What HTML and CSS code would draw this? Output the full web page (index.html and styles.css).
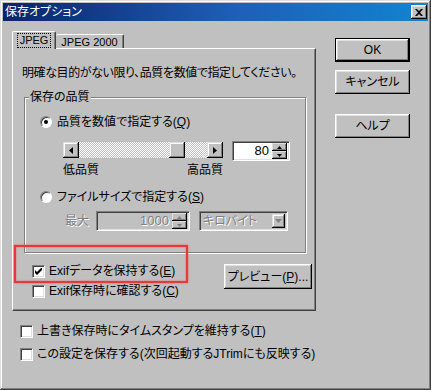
FILE: index.html
```html
<!DOCTYPE html>
<html lang="ja">
<head>
    <meta charset="UTF-8">
    <title>保存オプション</title>
    <link rel="stylesheet" href="styles.css">
</head>
<body>
    <div class="window">
        <!-- Title bar -->
        <div class="titlebar">
            <span class="title">保存オプション</span>
            <span class="close">
                <svg width="8" height="7" viewBox="0 0 8 7"><path d="M0 0h2l2 2 2-2h2L5 3.5 8 7H6L4 5 2 7H0l3-3.5z" fill="#000"/></svg>
            </span>
        </div>

        <div class="content">
            <div class="main">
                <!-- Tabs -->
                <div class="tabs">
                    <div class="tab active"><span class="focus">JPEG</span></div>
                    <div class="tab">JPEG 2000</div>
                </div>

                <div class="panel">
                    <p class="hint">明確な目的がない限り、品質を数値で指定してください。</p>

                    <fieldset class="group">
                        <legend>保存の品質</legend>

                        <div class="row">
                            <span class="radio checked"></span>
                            <span>品質を数値で指定する(<u>Q</u>)</span>
                        </div>

                        <div class="slider-row">
                            <div class="slider-col">
                                <div class="scrollbar">
                                    <span class="sb-btn">
                                        <svg width="4" height="7" viewBox="0 0 4 7"><path d="M4 0v7L0 3.5z" fill="#000"/></svg>
                                    </span>
                                    <div class="track"><span class="thumb"></span></div>
                                    <span class="sb-btn">
                                        <svg width="4" height="7" viewBox="0 0 4 7"><path d="M0 0v7l4-3.5z" fill="#000"/></svg>
                                    </span>
                                </div>
                                <div class="scale">
                                    <span>低品質</span>
                                    <span>高品質</span>
                                </div>
                            </div>
                            <div class="field spin">
                                <span class="value">80</span>
                                <div class="spin-btns">
                                    <span class="spin-btn"><svg width="5" height="3" viewBox="0 0 5 3"><path d="M0 3h5L2.5 0z" fill="#000"/></svg></span>
                                    <span class="spin-btn"><svg width="5" height="3" viewBox="0 0 5 3"><path d="M0 0h5L2.5 3z" fill="#000"/></svg></span>
                                </div>
                            </div>
                        </div>

                        <div class="row row-size">
                            <span class="radio"></span>
                            <span>ファイルサイズで指定する(<u>S</u>)</span>
                        </div>

                        <div class="size-row">
                            <span class="disabled">最大</span>
                            <div class="field field-off size-input">
                                <span class="value disabled">1000</span>
                                <div class="spin-btns">
                                    <span class="spin-btn"><svg width="5" height="3" viewBox="0 0 5 3"><path d="M0 3h5L2.5 0z" fill="#808080"/></svg></span>
                                    <span class="spin-btn"><svg width="5" height="3" viewBox="0 0 5 3"><path d="M0 0h5L2.5 3z" fill="#808080"/></svg></span>
                                </div>
                            </div>
                            <div class="field field-off combo">
                                <span class="combo-text disabled">キロバイト</span>
                                <span class="combo-btn"><svg width="7" height="4" viewBox="0 0 7 4"><path d="M0 0h7L3.5 4z" fill="#808080"/></svg></span>
                            </div>
                        </div>
                    </fieldset>

                    <div class="exif-row">
                        <div class="exif-checks">
                            <div class="row">
                                <span class="check">
                                    <svg width="7" height="7" viewBox="0 0 7 7"><path d="M0 2l2 2 5-5v3L2 7 0 5z" fill="#000"/></svg>
                                </span>
                                <span>Exifデータを保持する(<u>E</u>)</span>
                            </div>
                            <div class="row">
                                <span class="check"></span>
                                <span>Exif保存時に確認する(<u>C</u>)</span>
                            </div>
                        </div>
                        <button class="btn btn-preview">プレビュー(<u>P</u>)...</button>
                    </div>

                    <!-- annotation -->
                    <div class="highlight"></div>
                </div>

                <div class="options">
                    <div class="row">
                        <span class="check"></span>
                        <span>上書き保存時にタイムスタンプを維持する(<u>T</u>)</span>
                    </div>
                    <div class="row">
                        <span class="check"></span>
                        <span>この設定を保存する(次回起動するJTrimにも反映する)</span>
                    </div>
                </div>
            </div>

            <div class="side">
                <button class="btn btn-default">OK</button>
                <button class="btn">キャンセル</button>
                <button class="btn btn-help">ヘルプ</button>
            </div>
        </div>
    </div>
</body>
</html>
```

FILE: styles.css
```css
* {
    margin: 0;
    padding: 0;
    box-sizing: border-box;
}

body {
    width: 431px;
    height: 390px;
    overflow: hidden;
    background: #c0c0c0;
    font-family: "Liberation Sans", "Noto Sans CJK JP", sans-serif;
    font-size: 12px;
    line-height: 14px;
    font-feature-settings: "palt";
    color: #000;
}

u {
    text-decoration: underline;
    text-underline-offset: 1px;
}

.window {
    width: 431px;
    height: 390px;
    padding: 3px;
    background: #c0c0c0;
    box-shadow: inset -1px -1px #404040, inset 1px 1px #dfdfdf, inset -2px -2px #808080, inset 2px 2px #fff;
}

/* Title bar */
.titlebar {
    height: 18px;
    display: flex;
    align-items: center;
    justify-content: space-between;
    padding: 0 1px 0 2px;
    background: linear-gradient(90deg, #0a246a 0%, #1f5fb8 55%, #1084d0 100%);
    color: #fff;
}

.title {
    font-size: 12px;
}

.close {
    width: 16px;
    height: 14px;
    display: flex;
    align-items: center;
    justify-content: center;
    background: #c0c0c0;
    box-shadow: inset -1px -1px #000, inset 1px 1px #fff, inset -2px -2px #808080, inset 2px 2px #dfdfdf;
}

.content {
    display: flex;
    padding: 11px 0 0 9px;
}

.main {
    width: 304px;
}

/* Tabs */
.tabs {
    height: 16px;
    display: flex;
    align-items: flex-end;
    position: relative;
    z-index: 1;
    font-size: 11px;
}

.tab {
    height: 14px;
    display: flex;
    align-items: center;
    justify-content: center;
    white-space: nowrap;
    border-left: 1px solid #fff;
    border-top: 1px solid #fff;
    border-right: 1px solid #404040;
    border-radius: 2px 2px 0 0;
    box-shadow: inset -1px 0 #808080;
    line-height: 12px;
}

.tab.active {
    width: 44px;
    height: 18px;
    margin-bottom: -1px;
    padding-bottom: 1px;
    background: #c0c0c0;
}

.tab:nth-child(2) {
    width: 68px;
    border-left: none;
    padding-top: 1px;
}

.focus {
    outline: 1px dotted #000;
    padding: 0 2px;
    line-height: 13px;
}

/* Panel */
.panel {
    position: relative;
    height: 263px;
    border: 1px solid;
    border-color: #fff #404040 #404040 #fff;
    box-shadow: inset -1px -1px #808080;
    padding: 17px 0 0 9px;
}

.hint {
    height: 14px;
    letter-spacing: -0.4px;
}

.group {
    width: 282px;
    height: 163px;
    margin: 10px 0 0 2px;
    padding: 11px 0 0 15px;
    border: 1px solid #808080;
    box-shadow: inset 1px 1px #fff, 1px 1px #fff;
}

.group legend {
    margin-left: -11px;
    padding: 0 1px;
    background: #c0c0c0;
    line-height: 14px;
}

.row {
    height: 14px;
    display: flex;
    align-items: center;
    white-space: nowrap;
}

.radio {
    width: 12px;
    height: 12px;
    margin-right: 5px;
    border-radius: 50%;
    background: #fff;
    border: 1px solid;
    border-color: #808080 #fff #fff #808080;
    box-shadow: inset 1px 1px #404040;
    display: flex;
    align-items: center;
    justify-content: center;
}

.radio.checked::after {
    content: "";
    width: 4px;
    height: 4px;
    border-radius: 50%;
    background: #000;
}

/* Slider */
.slider-row {
    display: flex;
    align-items: flex-start;
    margin: 13px 0 0 23px;
}

.slider-col {
    width: 160px;
}

.scrollbar {
    height: 16px;
    display: flex;
}

.sb-btn {
    width: 16px;
    height: 16px;
    display: flex;
    align-items: center;
    justify-content: center;
    background: #c0c0c0;
    box-shadow: inset -1px -1px #000, inset 1px 1px #dfdfdf, inset -2px -2px #808080, inset 2px 2px #fff;
}

.track {
    flex: 1;
    display: flex;
    justify-content: flex-end;
    padding-right: 22px;
    background: repeating-conic-gradient(#fff 0 25%, #c0c0c0 0 50%) 0 0 / 2px 2px;
}

.thumb {
    width: 16px;
    height: 16px;
    background: #c0c0c0;
    box-shadow: inset -1px -1px #000, inset 1px 1px #dfdfdf, inset -2px -2px #808080, inset 2px 2px #fff;
}

.scale {
    display: flex;
    justify-content: space-between;
    margin-top: 5px;
}

/* Fields */
.field {
    height: 20px;
    display: flex;
    align-items: center;
    background: #fff;
    border: 1px solid;
    border-color: #808080 #fff #fff #808080;
    box-shadow: inset 1px 1px #404040, inset -1px -1px #dfdfdf;
    padding: 2px;
}

.field-off {
    background: #c0c0c0;
}

.spin {
    width: 58px;
    margin: -1px 0 0 9px;
}

.value {
    flex: 1;
    text-align: right;
    padding-right: 3px;
    font-size: 13px;
}

.spin-btns {
    width: 15px;
    height: 16px;
    display: flex;
    flex-direction: column;
}

.spin-btn {
    flex: 1;
    display: flex;
    align-items: center;
    justify-content: center;
    background: #c0c0c0;
    box-shadow: inset -1px -1px #000, inset 1px 1px #dfdfdf, inset -2px -2px #808080;
}

.row-size {
    margin-top: 13px;
}

.size-row {
    display: flex;
    align-items: center;
    margin: 7px 0 0 25px;
}

.disabled {
    color: #808080;
    text-shadow: 1px 1px #fff;
}

.size-input {
    width: 94px;
    margin-left: 7px;
}

.combo {
    width: 89px;
    margin-left: 9px;
}

.combo-text {
    flex: 1;
    padding-left: 1px;
}

.combo-btn {
    width: 13px;
    height: 14px;
    display: flex;
    align-items: center;
    justify-content: center;
    background: #c0c0c0;
    box-shadow: inset -1px -1px #000, inset 1px 1px #dfdfdf, inset -2px -2px #808080, inset 2px 2px #fff;
}

/* Exif section */
.exif-row {
    display: flex;
    align-items: flex-start;
    margin: 11px 0 0 10px;
}

.exif-checks {
    display: flex;
    flex-direction: column;
    gap: 6px;
    width: 192px;
}

.check {
    width: 13px;
    height: 13px;
    margin-right: 4px;
    display: flex;
    align-items: center;
    justify-content: center;
    background: #fff;
    border: 1px solid;
    border-color: #808080 #fff #fff #808080;
    box-shadow: inset 1px 1px #404040, inset -1px -1px #dfdfdf;
}

.btn {
    width: 75px;
    height: 24px;
    border: none;
    background: #c0c0c0;
    font: inherit;
    font-feature-settings: "palt";
    color: #000;
    box-shadow: inset -1px -1px #000, inset 1px 1px #fff, inset -2px -2px #808080, inset 2px 2px #dfdfdf;
}

.btn-preview {
    width: 88px;
    height: 25px;
}

.btn-default {
    border: 1px solid #000;
    box-shadow: inset -1px -1px #000, inset 1px 1px #fff, inset -2px -2px #808080, inset 2px 2px #dfdfdf;
}

.highlight {
    position: absolute;
    left: 1px;
    top: 196px;
    width: 174px;
    height: 38px;
    border: 2px solid #e8383a;
    box-shadow: 0 0 2px #f06060, inset 0 0 2px #f06060;
    pointer-events: none;
}

/* Bottom options */
.options {
    margin: 13px 0 0 8px;
    display: flex;
    flex-direction: column;
    gap: 9px;
}

/* Side buttons */
.side {
    margin-left: 19px;
    padding-top: 6px;
    display: flex;
    flex-direction: column;
    gap: 8px;
}

.btn-help {
    margin-top: 12px;
}
```
